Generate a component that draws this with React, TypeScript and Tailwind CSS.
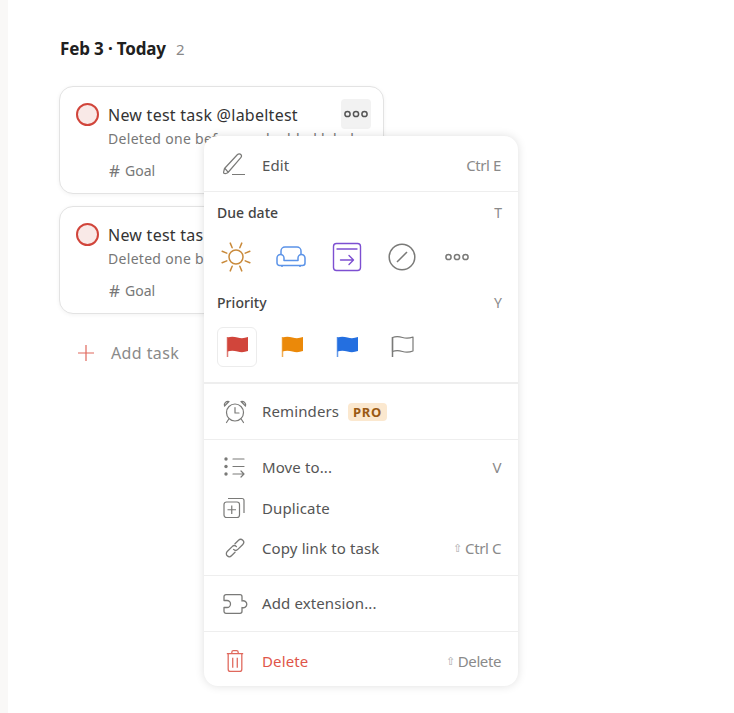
import React from "react";

const font = { fontFamily: '"Noto Sans", sans-serif' };

const Flag = ({ color, outline }: { color: string; outline?: boolean }) => (
  <svg width="24" height="24" viewBox="0 0 24 24" fill="none">
    <path d="M2.500 2.500c3.500-1.200 6.500-1 10 0s7 .8 10.500-.5v14c-3.500 1.300-7 1.500-10.500.5s-6.500-1.200-10 0z" fill={outline ? "none" : color} stroke={outline ? color : "none"} strokeWidth="1.200" strokeLinejoin="round" />
    <path d="M2.500 2v20" stroke={color} strokeWidth="1.500" strokeOpacity={outline ? 1 : 0.7} />
  </svg>
);

const Dots = ({ color, sw = 1.5 }: { color: string; sw?: number }) => (
  <svg width="26" height="10" viewBox="0 0 26 10" fill="none" stroke={color} strokeWidth={sw}>
    <circle cx="4.500" cy="5" r="2.600" />
    <circle cx="13" cy="5" r="2.600" />
    <circle cx="21.500" cy="5" r="2.600" />
  </svg>
);

const G = "#7a7a78";

const Row = ({ icon, label, right, red, cls }: { icon: React.ReactNode; label: React.ReactNode; right?: React.ReactNode; red?: boolean; cls: string }) => (
  <div className={`flex items-center pl-[17px] pr-[17px] shrink-0 ${cls}`}>
    <div className="w-[28px] h-[28px] flex items-center justify-center shrink-0">{icon}</div>
    <div className={`ml-[13px] flex-1 flex items-center text-[15px] tracking-[0.12px] ${red ? "text-[#e0554a]" : "text-[#555555]"}`}>{label}</div>
    {right && <div className="text-[15px] text-[#8a8a8a] tracking-[-0.4px]">{right}</div>}
  </div>
);

const Line = ({ h = "h-px" }: { h?: string }) => <div className={`${h} bg-[#eeeeee] shrink-0`} />;

const Task = ({ title, first }: { title: string; first?: boolean }) => (
  <div className="relative w-[325px] h-[108px] rounded-[14px] border border-[#e3e3e3] bg-white pl-[16px] pt-[16px] shadow-[0_1px_4px_rgba(0,0,0,0.05)]">
    <div className="flex items-start">
      <div className="w-[23px] h-[23px] rounded-full border-2 border-[#d1453b] bg-[#f9e9e7] shrink-0" />
      <div className="ml-[9px]">
        <div className="text-[16px] leading-[24px] text-[#333] tracking-[0.25px] whitespace-nowrap">{title}</div>
        <div className="mt-[2px] text-[14px] leading-[20px] text-[#777] tracking-[0.3px] whitespace-nowrap">Deleted one before and added label</div>
        <div className="mt-[12px] flex items-center text-[14px] leading-[20px] text-[#777]">
          <span className="mr-[5px] ml-[1px] text-[17px]">#</span>Goal
        </div>
      </div>
    </div>
    {first && (
      <div className="absolute right-[12px] top-[12px] w-[30px] h-[30px] rounded-[4px] bg-[#f2f2f2] flex items-center justify-center">
        <Dots color="#555" sw={1.500} />
      </div>
    )}
  </div>
);

export default function App() {
  return (
    <div style={font} className="relative w-[734px] h-[713px] bg-white overflow-hidden flex">
      <div className="w-[8px] bg-[#f9f8f7] shrink-0" />
      <div className="pl-[51px] pt-[38px]">
        <div className="ml-[1px] h-[22px] flex items-center text-[17px] font-bold text-[#202020] tracking-[-0.15px]">
          Feb 3 · Today <span className="ml-[10px] font-normal text-[15px] text-[#888]">2</span>
        </div>
        <div className="mt-[26px] flex flex-col gap-[12px]">
          <Task title="New test task @labeltest" first />
          <Task title="New test task @labeltest" />
        </div>
        <div className="mt-[25px] flex items-center pl-[18px] h-[28px]">
          <svg width="18" height="18" viewBox="0 0 18 18" stroke="#e0685c" strokeWidth="1.200"><path d="M9 1v16M1 9h16" /></svg>
          <span className="ml-[16px] text-[16px] text-[#8a8a8a] tracking-[0.4px]">Add task</span>
        </div>
      </div>

      <div className="absolute left-[204px] top-[136px] w-[314px] h-[550px] rounded-[14px] bg-white shadow-[0_0_10px_rgba(0,0,0,0.13)] flex flex-col">
        <Row cls="h-[55px] pt-[3px]" label="Edit" right="Ctrl E" icon={
          <svg width="24" height="24" viewBox="0 0 24 24" fill="none" stroke={G} strokeWidth="1.200" strokeLinejoin="round"><path d="M0.500 19.500l1-4L14.500 1.500c1-.9 2.500-.9 3.300 0s.8 2.300 0 3.200L5 19.500c-1.500 1.300-4.500 1.500-4.500 0zM2 15.500l3.300 3.800M9 21.500h13" /></svg>
        } />
        <Line />

        <div className="h-[190px] px-[13px] shrink-0">
          <div className="h-[41px] flex items-center justify-between text-[14px] text-[#444] tracking-[0.05px]">
            <span className="font-medium">Due date</span><span className="text-[#8a8a8a] mr-[3px]">T</span>
          </div>
          <div className="flex items-center h-[48px] ml-[3px]">
            <svg className="shrink-0" width="32" height="32" viewBox="0 0 32 32" fill="none" stroke="#c98a3b" strokeWidth="1.500" strokeLinecap="round"><circle cx="16" cy="16" r="7" /><path d="M25.240 19.830l4.620 1.910M25.240 12.170l4.620-1.910M6.760 19.830l-4.620 1.910M6.760 12.170l-4.620-1.910M19.830 25.240l1.910 4.620M12.170 25.240l-1.910 4.620M19.830 6.760l1.910-4.620M12.170 6.760l-1.910-4.620" /></svg>
            <svg className="ml-[24px] shrink-0" width="30" height="22" viewBox="0 0 30 22" fill="none" stroke="#5b93e8" strokeWidth="1.500" strokeLinejoin="round"><path d="M5 9V5a4 4 0 0 1 4-4h12a4 4 0 0 1 4 4v4" /><path d="M1 12a3.500 3.500 0 0 1 7 0v2.500h14V12a3.500 3.500 0 0 1 7 0v5a2.500 2.500 0 0 1-2.500 2.500h-23A2.500 2.500 0 0 1 1 17z" /><path d="M6 19.500V21M24 19.500V21" /></svg>
            <svg className="ml-[26px] shrink-0" width="30" height="30" viewBox="0 0 30 30" fill="none" stroke="#7d4fd1" strokeWidth="1.400" strokeLinecap="round" strokeLinejoin="round"><rect x="1.500" y="1.500" width="27" height="27" rx="3" /><path d="M5 7h20" /><path d="M8.500 18h13M17 13.500l4.500 4.500-4.500 4.500" /></svg>
            <svg className="ml-[26px] shrink-0" width="28" height="28" viewBox="0 0 28 28" fill="none" stroke={G} strokeWidth="1.500"><circle cx="14" cy="14" r="12.800" /><path d="M9 19L19 9" /></svg>
            <div className="ml-[28px]"><Dots color={G} /></div>
          </div>
          <div className="h-[42px] flex items-center justify-between text-[14px] text-[#444] tracking-[0.05px]">
            <span className="font-medium">Priority</span><span className="text-[#8a8a8a] mr-[3px]">Y</span>
          </div>
          <div className="flex items-center mt-[4px]">
            <div className="w-[40px] h-[40px] rounded-[6px] border border-[#ececec] flex items-center justify-center"><Flag color="#d1453b" /></div>
            <div className="w-[40px] h-[40px] ml-[15px] flex items-center justify-center"><Flag color="#eb8909" /></div>
            <div className="w-[40px] h-[40px] ml-[15px] flex items-center justify-center"><Flag color="#246fe0" /></div>
            <div className="w-[40px] h-[40px] ml-[15px] flex items-center justify-center"><Flag color={G} outline /></div>
          </div>
        </div>
        <Line h="h-[2px]" />

        <Row cls="h-[55px]" label={<>Reminders<span className="ml-[9px] px-[5px] h-[18px] leading-[18px] rounded-[4px] bg-[#fbe8cf] text-[#9a5a13] text-[13px] font-bold tracking-[0.6px]">PRO</span></>} icon={
          <svg width="26" height="26" viewBox="0 0 26 26" fill="none" stroke={G} strokeWidth="1.200" strokeLinecap="round" strokeLinejoin="round"><circle cx="13" cy="13.500" r="8.500" /><path d="M13 8.500v5.500h4M2.500 7c-1-2.500 2-5.500 4.500-4.500zM23.500 7c1-2.500-2-5.500-4.500-4.500zM6.500 20.500L4.500 23.500M19.500 20.500l2 3" /></svg>
        } />
        <Line />

        <div className="h-[135px] pt-[7px] flex flex-col shrink-0">
          <Row cls="h-[41px]" label="Move to..." right="V" icon={
            <svg width="24" height="24" viewBox="0 0 24 24" fill="none" stroke={G} strokeWidth="1.200" strokeLinecap="round" strokeLinejoin="round"><circle cx="3" cy="3" r="1.700" fill={G} stroke="none" /><circle cx="3" cy="10.500" r="1.700" fill={G} stroke="none" /><circle cx="3" cy="18" r="1.700" fill={G} stroke="none" /><path d="M10 3h11M10 10.500h11M10 18h11M18 15l3 3-3 3" /></svg>
          } />
          <Row cls="h-[40px]" label="Duplicate" icon={
            <svg width="24" height="24" viewBox="0 0 24 24" fill="none" stroke={G} strokeWidth="1.200" strokeLinejoin="round"><rect x="1" y="6" width="15.500" height="15.500" rx="2.500" /><path d="M8.750 9.500v8.500M4.500 13.750H13M5 2.500h14a2 2 0 0 1 2 2V17" /></svg>
          } />
          <Row cls="h-[40px]" label="Copy link to task" right={<span className="flex items-center"><span className="text-[11px] mr-[3px] text-[#aaa]">⇧</span>Ctrl C</span>} icon={
            <svg width="20" height="20" viewBox="0 0 20 20" fill="none" stroke={G} strokeWidth="1.300" strokeLinecap="round"><g transform="rotate(-45 10 10)"><path d="M12 10a3 3 0 0 0-3-3H2a3 3 0 0 0 0 6h5" /><path d="M8 10a3 3 0 0 0 3 3h7a3 3 0 0 0 0-6h-5" /></g></svg>
          } />
        </div>
        <Line />

        <Row cls="h-[55px]" label="Add extension..." icon={
          <svg className="shrink-0 ml-[2px]" width="26" height="20" viewBox="0 0 26 20" fill="none" stroke={G} strokeWidth="1.300" strokeLinejoin="round"><path d="M3 .7h14a2 2 0 0 1 2 2V7a3.500 3.500 0 1 1 0 6.500v3.800a2 2 0 0 1-2 2H3a2 2 0 0 1-2-2v-3.800h3a3.500 3.500 0 0 0 0-7H1V2.700a2 2 0 0 1 2-2z" /></svg>
        } />
        <Line />

        <Row cls="h-[54px] pt-[4px]" red label="Delete" right={<span className="flex items-center"><span className="text-[11px] mr-[3px] text-[#aaa]">⇧</span>Delete</span>} icon={
          <svg width="20" height="24" viewBox="0 0 22 26" fill="none" stroke="#e0685c" strokeWidth="1.400" strokeLinejoin="round"><path d="M2 5h18M7.500 5V3.500c0-1 .7-1.800 1.700-1.800h3.600c1 0 1.700.8 1.700 1.800V5M3.500 5v17c0 1.500 1 2.500 2.500 2.500h10c1.500 0 2.500-1 2.500-2.500V5M8.500 9.500v11M13.500 9.500v11" /></svg>
        } />
      </div>
    </div>
  );
}
